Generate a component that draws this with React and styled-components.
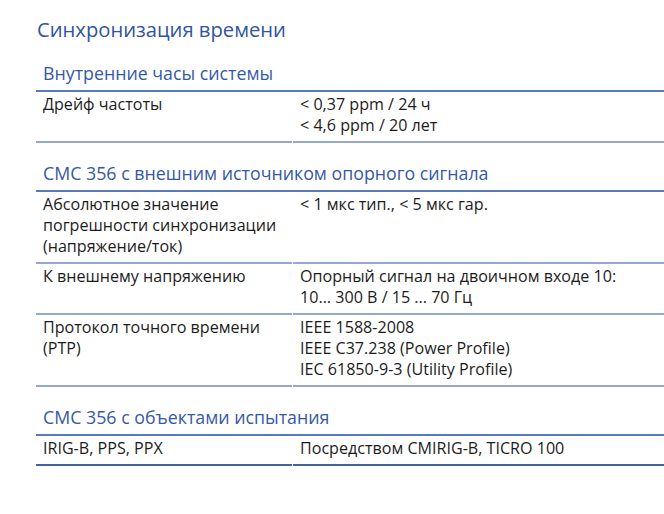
import React from 'react'
import styled, { createGlobalStyle } from 'styled-components'

const GlobalStyle = createGlobalStyle`
  body{
    margin: 0;
    background: #ffffff;
    font-family: "Open Sans", "Noto Sans", sans-serif;
    overflow: hidden;
  }
`

const Page = styled.div`
  padding: 15px 0 0 36px;
  width: 680px;
`

const Title = styled.h1`
  margin: 0 0 0 1px;
  font-size: 20.2px;
  line-height: 28px;
  font-weight: 400;
  color: #2f55a3;
`

const Section = styled.section`
  margin-top: 18px;
`

const SectionHead = styled.h2`
  margin: 0;
  padding: 0 0 5px 7px;
  font-size: 17.8px;
  line-height: 24px;
  font-weight: 400;
  color: #3559a6;
  border-bottom: 2px solid #5a79ba;
`

const Row = styled.div`
  display: grid;
  grid-template-columns: 256px 1fr;
  column-gap: 1px;
`

const Cell = styled.div`
  padding: 2px 7px 5px;
  font-size: 16.1px;
  line-height: 21px;
  color: #1c1c1c;
  border-bottom: 2px solid ${p => (p.$last ? '#42629f' : '#94a8d2')};
`

const data = [
  {
    title: 'Внутренние часы системы',
    rows: [['Дрейф частоты', ['< 0,37 ppm / 24 ч', '< 4,6 ppm / 20 лет']]],
  },
  {
    title: 'CMC 356 с внешним источником опорного сигнала',
    rows: [
      [
        ['Абсолютное значение', 'погрешности синхронизации', '(напряжение/ток)'],
        ['< 1 мкс тип., < 5 мкс гар.'],
      ],
      ['К внешнему напряжению', ['Опорный сигнал на двоичном входе 10:', '10... 300 В / 15 ... 70 Гц']],
      [['Протокол точного времени', '(PTP)'], ['IEEE 1588-2008', 'IEEE C37.238 (Power Profile)', 'IEC 61850-9-3 (Utility Profile)']],
    ],
  },
  {
    title: 'CMC 356 с объектами испытания',
    last: true,
    rows: [['IRIG-B, PPS, PPX', ['Посредством CMIRIG-B, TICRO 100']]],
  },
]

const lines = v => (Array.isArray(v) ? v : [v]).map((t, i) => <div key={i}>{t}</div>)

export default function App() {
  return (
    <>
      <GlobalStyle />
      <Page>
        <Title>Синхронизация времени</Title>
        {data.map(sec => (
          <Section key={sec.title}>
            <SectionHead>{sec.title}</SectionHead>
            {sec.rows.map((r, i) => (
              <Row key={i}>
                <Cell $last={sec.last}>{lines(r[0])}</Cell>
                <Cell $last={sec.last}>{lines(r[1])}</Cell>
              </Row>
            ))}
          </Section>
        ))}
      </Page>
    </>
  )
}
